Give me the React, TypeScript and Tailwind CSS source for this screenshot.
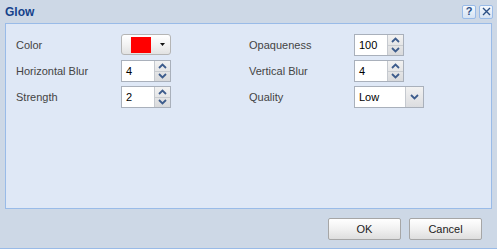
import type { ReactNode } from 'react';

const font = { fontFamily: '"Liberation Sans", Arial, sans-serif' };

function Chevron({ up }: { up?: boolean }) {
  return (
    <svg width="9" height="6" viewBox="0 0 9 6" className="block">
      <path
        d={up ? 'M1 5L4.5 1.5L8 5' : 'M1 1L4.5 4.5L8 1'}
        fill="none"
        stroke="#3d5c8c"
        strokeWidth={1.8}
      />
    </svg>
  );
}

function Spinner({ value, width = 33 }: { value: string; width?: number }) {
  return (
    <div className="flex h-[22px] border border-[#a9b0bb] bg-white">
      <div
        className="flex items-center pl-[4px] text-[11px] text-black"
        style={{ width: width - 1 }}
      >
        {value}
      </div>
      <div className="flex w-[16px] flex-col border-l border-[#c5c9cf] bg-gradient-to-b from-[#f2f2f2] to-[#d9dadc]">
        <div className="flex flex-1 items-center justify-center border-b border-[#c9ccd0]">
          <Chevron up />
        </div>
        <div className="flex flex-1 items-center justify-center">
          <Chevron />
        </div>
      </div>
    </div>
  );
}

function Label({ children }: { children: ReactNode }) {
  return (
    <div className="flex h-[22px] items-center text-[11px] text-[#444]">
      {children}
    </div>
  );
}

function Button({ children }: { children: ReactNode }) {
  return (
    <div className="flex h-[22px] w-[73px] items-center justify-center rounded-[2px] border border-[#a6a6a6] bg-gradient-to-b from-[#ffffff] via-[#f1f1f1] to-[#dedede] text-[11px] text-[#222]">
      {children}
    </div>
  );
}

export default function App() {
  return (
    <div
      className="flex h-[249px] w-[497px] flex-col border-b border-[#99bbe8] bg-[#cdd8e6]"
      style={font}
    >
      <div className="flex h-[23px] items-center justify-between pl-[5px] pr-[4px]">
        <span className="text-[12px] font-bold text-[#15428b]">Glow</span>
        <div className="flex gap-[3px]">
          <div className="flex h-[14px] w-[14px] items-center justify-center rounded-[2px] border border-[#99bbe8] bg-gradient-to-b from-[#f4f8fd] to-[#d6e3f3] text-[11px] font-bold leading-none text-[#2b4f85]">
            ?
          </div>
          <div className="flex h-[14px] w-[14px] items-center justify-center rounded-[2px] border border-[#99bbe8] bg-gradient-to-b from-[#f4f8fd] to-[#d6e3f3]">
            <svg width="9" height="9" viewBox="0 0 9 9">
              <path d="M1 1L8 8M8 1L1 8" stroke="#2b4f85" strokeWidth={1.4} />
            </svg>
          </div>
        </div>
      </div>

      <div className="mx-[5px] h-[186px] border border-[#99bbe8] bg-[#dfe8f6] pl-[10px] pt-[10px]">
        <div className="grid grid-cols-[105px_128px_105px_auto] gap-y-[4px]">
          <Label>Color</Label>
          <div>
            <div className="flex h-[21px] w-[50px] items-center rounded-[3px] border border-[#b5b5b5] bg-gradient-to-b from-[#ffffff] via-[#f3f3f3] to-[#e2e2e2] pl-[9px]">
              <div className="h-[16px] w-[20px] bg-[#ff0000]" />
              <svg width="5" height="3" viewBox="0 0 5 3" className="ml-[9px]">
                <path d="M0 0H5L2.5 3Z" fill="#111" />
              </svg>
            </div>
          </div>
          <Label>Opaqueness</Label>
          <div className="w-[50px]">
            <Spinner value="100" />
          </div>

          <Label>Horizontal Blur</Label>
          <div className="w-[50px]">
            <Spinner value="4" />
          </div>
          <Label>Vertical Blur</Label>
          <div className="w-[50px]">
            <Spinner value="4" />
          </div>

          <Label>Strength</Label>
          <div className="w-[50px]">
            <Spinner value="2" />
          </div>
          <Label>Quality</Label>
          <div>
            <div className="flex h-[22px] w-[70px] border border-[#a9b0bb] bg-white">
              <div className="flex flex-1 items-center pl-[4px] text-[11px] text-black">
                Low
              </div>
              <div className="flex w-[18px] items-center justify-center border-l border-[#c5c9cf] bg-gradient-to-b from-[#f2f2f2] to-[#dcdde0]">
                <Chevron />
              </div>
            </div>
          </div>
        </div>
      </div>

      <div className="flex flex-1 justify-end gap-[8px] pr-[15px] pt-[9px]">
        <Button>OK</Button>
        <Button>Cancel</Button>
      </div>
    </div>
  );
}
